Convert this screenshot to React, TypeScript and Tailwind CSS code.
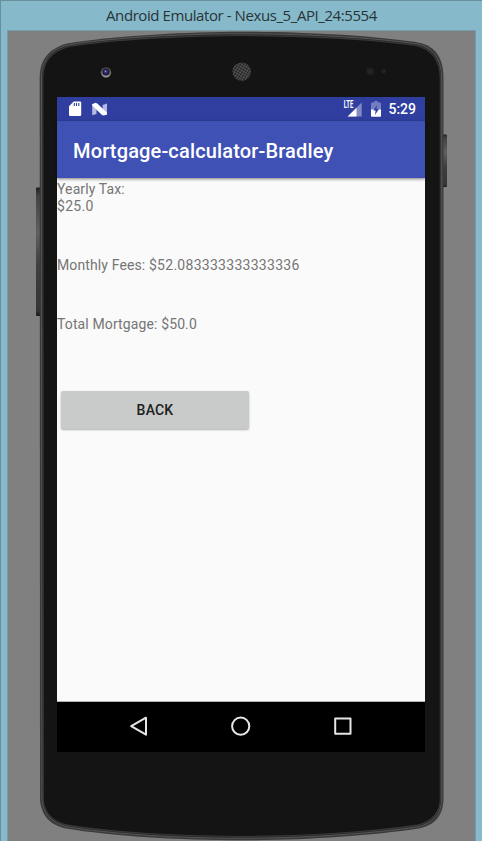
import React from "react";

function PhoneBody() {
  return (
    <svg className="absolute inset-0" width="467" height="810" viewBox="8 31 467 810" aria-hidden="true">
      <defs>
        <linearGradient id="key" x1="0" y1="0" x2="0" y2="1">
          <stop offset="0" stopColor="#1d1d1d" />
          <stop offset="0.06" stopColor="#424242" />
          <stop offset="0.35" stopColor="#606060" />
          <stop offset="0.6" stopColor="#3f3f3f" />
          <stop offset="0.96" stopColor="#353535" />
          <stop offset="1" stopColor="#161616" />
        </linearGradient>
        <linearGradient id="lens" x1="0" y1="0" x2="0" y2="1">
          <stop offset="0" stopColor="#3a3a3a" />
          <stop offset="0.5" stopColor="#666" />
          <stop offset="1" stopColor="#a0a0a0" />
        </linearGradient>
        <pattern id="mesh" width="2.6" height="2.6" patternUnits="userSpaceOnUse" patternTransform="rotate(30)">
          <rect width="2.6" height="2.6" fill="#5e5e5e" />
          <circle cx="1.3" cy="1.3" r="1" fill="#151515" />
        </pattern>
      </defs>
      <rect x="36" y="187.5" width="6" height="128.5" rx="1" fill="url(#key)" />
      <rect x="442" y="134.5" width="5" height="52.5" rx="1" fill="url(#key)" />
      <path
        d="M39.7 77C40 60 48 49 67 43.5C115 35.5 190 31.7 241 31.7C300 31.7 375 35.5 418 42.5C436 46 443 58 443.5 77V800C443 814 436 825 419 828.5C370 836 300 840.3 241 840.3C180 840.3 110 836 66 828.5C49 825 41 814 40 800Z"
        fill="#3a3a3a"
      />
      <path
        d="M41.5 77C42 61 49.5 50 68 45C115 37 190 33.7 241 33.7C300 33.7 375 37.5 417 44C434 48 441.2 60 441.7 77V800C441 813 434 823 418 826.7C370 834 300 838.3 241 838.3C180 838.3 110 834 67 826.7C51 823 43 813 42 800Z"
        fill="#2a2a2a"
        stroke="#555557"
        strokeWidth="1"
      />
      <path
        d="M42.8 77C43 63 51 51.5 69 46.5C116 38.7 190 35.5 241 35.5C300 35.5 375 39.2 416 45.5C432 49.5 439.8 61 440.3 77V800C440 812 432 822 417 825.2C370 832.3 300 836.5 241 836.5C180 836.5 110 832.3 68 825.2C52 822 44 812 43.3 800Z"
        fill="#141414"
        stroke="#383838"
        strokeWidth="1.2"
      />
      <circle cx="106" cy="72.3" r="5.2" fill="url(#lens)" />
      <circle cx="106" cy="72" r="3.6" fill="#202034" />
      <circle cx="105.8" cy="71.8" r="2" fill="#34348c" />
      <circle cx="105.5" cy="71.2" r="0.7" fill="#a6a6df" />
      <circle cx="241.7" cy="71.7" r="9.3" fill="url(#mesh)" />
      <circle cx="370.2" cy="71.3" r="3.8" fill="#202020" />
      <circle cx="370.2" cy="71.3" r="2" fill="#292323" />
      <circle cx="383.7" cy="71.3" r="2.2" fill="#252222" />
    </svg>
  );
}

function StatusBar() {
  return (
    <div className="flex h-6 items-center bg-[#303f9f]">
      <svg className="ml-3 shrink-0" width="13" height="16" viewBox="0 0 13 16">
        <path d="M4.7.5H11q1.2 0 1.2 1.2v12.1q0 1.2-1.2 1.2H1.2Q0 15 0 13.8V5.2Z" fill="#fff" />
        <path d="M5.3 2v3M7.5 2v3M9.8 2v3" stroke="#303f9f" strokeWidth="1.1" />
      </svg>
      <svg className="ml-2.5 shrink-0" width="15" height="14" viewBox="0 0 15 14">
        <path d="M.2 2L4.5 4v8L.2 13.2ZM15 1.5L10.6 3v8l4.4 1.7Z" fill="#b5bae0" />
        <path d="M.2 2.3L3.4.7 5.3 1.5 15 10.8v1.8l-3.2 1-1.8-.7L.2 3.5Z" fill="#fff" />
      </svg>
      <svg className="ml-auto shrink-0" width="20" height="18" viewBox="0 0 20 18">
        <path d="M18.7 2.5V16.5H4.7Z" fill="#838bc6" />
        <path d="M13.5 7.7V16.5H4.7Z" fill="#fff" />
        <path d="M0 0H10.5V9H0Z" fill="#303f9f" />
        <text x=".7" y="8.3" textLength="9.5" lengthAdjust="spacingAndGlyphs" fill="#fff" fontFamily="Roboto, sans-serif" fontSize="10" fontWeight="700">LTE</text>
      </svg>
      <svg className="ml-2 mr-[7px] shrink-0" width="10" height="16" viewBox="0 0 10 16">
        <path d="M3.2 0h3.6v1.5H9q1 0 1 1V9H0V2.5q0-1 1-1h2.2Z" fill="#737dbf" />
        <path d="M0 8.5H10V15q0 .8-.8.8H.8Q0 15.8 0 15Z" fill="#fff" />
        <path d="M5.9 4.3L2.3 9.5h2.3L4 14l3.9-6H5.5Z" fill="#303f9f" />
      </svg>
      <span className="mr-[9px] text-[14px] font-medium leading-none text-white">5:29</span>
    </div>
  );
}

function NavigationBar() {
  return (
    <div className="flex h-[51px] shrink-0 items-start border-t border-[#b4b4b4] bg-black px-[31px] pt-[13px]">
      <div className="flex flex-1 justify-center">
        <svg width="22" height="22" viewBox="0 0 22 22" fill="none" stroke="#e6e6e6" strokeWidth="2" strokeLinejoin="round">
          <path d="M18 2.7v17L3.2 11.2Z" />
        </svg>
      </div>
      <div className="flex flex-1 justify-center">
        <svg width="22" height="22" viewBox="0 0 22 22" fill="none" stroke="#e6e6e6" strokeWidth="2">
          <circle cx="10.7" cy="11.2" r="8.6" />
        </svg>
      </div>
      <div className="flex flex-1 justify-center">
        <svg width="22" height="22" viewBox="0 0 22 22" fill="none" stroke="#e6e6e6" strokeWidth="2" strokeLinejoin="round">
          <rect x="3.2" y="3.5" width="15.3" height="15.3" />
        </svg>
      </div>
    </div>
  );
}

export default function App() {
  return (
    <div className="flex h-[841px] w-[482px] flex-col overflow-hidden border-l border-t border-[#698f9d] bg-[#86b9ca] font-['Roboto',sans-serif]">
      <header className="flex h-[29px] shrink-0 items-center justify-center font-['Open_Sans',sans-serif] text-[15px] tracking-[-0.42px] text-[#293438]">
        <span className="whitespace-nowrap">Android Emulator - Nexus_5_API_24:5554</span>
      </header>
      <div className="relative ml-1.5 h-[811px] w-[469px] shrink-0 border-x border-t border-[#739daa] bg-[#808080]">
        <PhoneBody />
        <main className="relative ml-[49px] mt-[66px] flex h-[655px] w-[368px] flex-col bg-[#fafafa]">
          <StatusBar />
          <div className="z-10 flex h-[57px] shrink-0 items-center bg-[#3f51b5] pl-4 pt-[3px] text-[20px] font-medium tracking-[0.15px] text-white shadow-[0_1px_3px_rgba(0,0,0,0.5)]">
            <h1 className="whitespace-nowrap">Mortgage-calculator-Bradley</h1>
          </div>
          <div className="flex flex-1 flex-col items-start pt-[3px] text-[14px] leading-[17px] tracking-[0.12px] text-[#757575]">
            <p>Yearly Tax:<br /><span className="tracking-[0.28px]">$25.0</span></p>
            <p className="mt-[42px]">Monthly Fees: <span className="tracking-[0.28px]">$52.083333333333336</span></p>
            <p className="mt-[42px]">Total Mortgage: $50.0</p>
            <button className="ml-1 mt-[58px] h-[38px] w-[188px] rounded-[2px] bg-[#c9cbca] text-[14px] font-medium tracking-[0.2px] text-[#202020] shadow-[0_1px_2px_rgba(0,0,0,0.3)]">BACK</button>
          </div>
          <NavigationBar />
        </main>
      </div>
    </div>
  );
}
